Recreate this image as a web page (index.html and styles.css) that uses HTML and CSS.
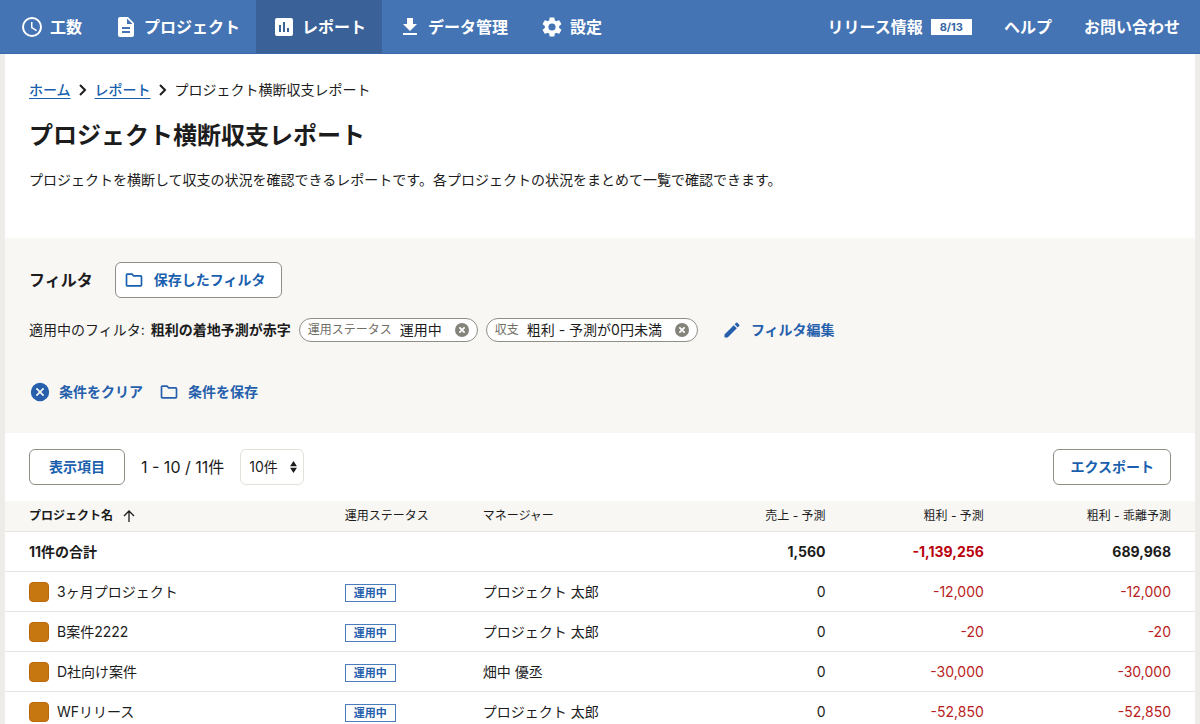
FILE: index.html
```html
<!DOCTYPE html>
<html lang="ja">
<head>
<meta charset="utf-8">
<meta name="viewport" content="width=device-width, initial-scale=1">
<title>プロジェクト横断収支レポート</title>
<link rel="stylesheet" href="styles.css">
</head>
<body>
<header class="header">
  <nav class="nav">
    <a class="nav-item" href="#"><svg class="icon-nav" viewBox="0 0 24 24"><path d="M12 2a10 10 0 1 0 0 20 10 10 0 0 0 0-20zm0 18a8 8 0 1 1 0-16 8 8 0 0 1 0 16zm.5-13H11v6l5.200 3.200.800-1.300-4.500-2.700z"/></svg>工数</a>
    <a class="nav-item" href="#"><svg class="icon-nav" viewBox="0 0 24 24"><path d="M14 2H6a2 2 0 0 0-2 2v16c0 1.100.900 2 2 2h12a2 2 0 0 0 2-2V8zm2 16H8v-2h8zm0-4H8v-2h8zm-3-5V3.500L18.500 9z"/></svg>プロジェクト</a>
    <a class="nav-item nav-current" href="#" aria-current="page"><svg class="icon-nav" viewBox="0 0 24 24"><path d="M19 3H5a2 2 0 0 0-2 2v14c0 1.100.900 2 2 2h14a2 2 0 0 0 2-2V5a2 2 0 0 0-2-2zM9 17H7v-7h2zm4 0h-2V7h2zm4 0h-2v-4h2z"/></svg>レポート</a>
    <a class="nav-item" href="#"><svg class="icon-nav" viewBox="0 0 24 24"><path d="M19 9h-4V3H9v6H5l7 7zM5 18v2h14v-2z"/></svg>データ管理</a>
    <a class="nav-item" href="#"><svg class="icon-nav" viewBox="0 0 24 24"><path d="M19.140 12.940c.040-.300.060-.610.060-.940 0-.320-.020-.640-.070-.940l2.030-1.580a.49.49 0 0 0 .120-.610l-1.920-3.320a.488.488 0 0 0-.590-.220l-2.390.960c-.500-.380-1.030-.700-1.620-.940l-.360-2.540a.484.484 0 0 0-.480-.410h-3.840c-.240 0-.430.170-.470.410l-.360 2.540c-.590.240-1.130.570-1.620.940l-2.390-.960c-.220-.080-.470 0-.590.220L2.740 8.870c-.120.210-.080.470.120.610l2.030 1.580c-.050.300-.090.630-.090.940s.020.640.070.940l-2.030 1.580a.49.49 0 0 0-.120.610l1.920 3.320c.120.220.370.290.590.220l2.390-.960c.500.380 1.030.700 1.620.940l.360 2.540c.050.240.240.410.480.410h3.840c.240 0 .440-.170.470-.410l.360-2.540c.590-.240 1.130-.560 1.620-.940l2.390.960c.220.080.470 0 .590-.220l1.920-3.320c.120-.220.070-.470-.120-.610zM12 15.600A3.600 3.600 0 1 1 12 8.400a3.600 3.600 0 0 1 0 7.200z"/></svg>設定</a>
  </nav>
  <nav class="subnav">
    <a class="subnav-item" href="#">リリース情報<span class="date">8/13</span></a>
    <a class="subnav-item" href="#">ヘルプ</a>
    <a class="subnav-item" href="#">お問い合わせ</a>
  </nav>
</header>
<main class="page">
  <section class="intro">
    <nav class="breadcrumb">
      <a class="crumb" href="#">ホーム</a>
      <svg class="chevron" viewBox="0 0 8 12"><path d="M1 1l5 5-5 5"/></svg>
      <a class="crumb" href="#">レポート</a>
      <svg class="chevron" viewBox="0 0 8 12"><path d="M1 1l5 5-5 5"/></svg>
      <span>プロジェクト横断収支レポート</span>
    </nav>
    <h1 class="title">プロジェクト横断収支レポート</h1>
    <p class="lead">プロジェクトを横断して収支の状況を確認できるレポートです。各プロジェクトの状況をまとめて一覧で確認できます。</p>
  </section>
  <section class="filter">
    <div class="filter-head">
      <h2 class="filter-title">フィルタ</h2>
      <button class="button button-saved" type="button"><svg class="icon" viewBox="0 0 24 24"><path d="M9.170 6l2 2H20v10H4V6zM10 4H4a2 2 0 0 0-2 2v12c0 1.100.900 2 2 2h16a2 2 0 0 0 2-2V8a2 2 0 0 0-2-2h-8z"/></svg>保存したフィルタ</button>
    </div>
    <div class="applied">
      <span class="applied-name">適用中のフィルタ: <b class="strong">粗利の着地予測が赤字</b></span>
      <span class="chip"><span class="chip-key">運用ステータス</span>運用中<button class="chip-remove" type="button" aria-label="運用ステータスを削除"><svg class="icon-remove" viewBox="0 0 16 16"><circle cx="8" cy="8" r="8"/><path d="M5 5l6 6M11 5l-6 6"/></svg></button></span>
      <span class="chip"><span class="chip-key">収支</span>粗利 - 予測が0円未満<button class="chip-remove" type="button" aria-label="収支を削除"><svg class="icon-remove" viewBox="0 0 16 16"><circle cx="8" cy="8" r="8"/><path d="M5 5l6 6M11 5l-6 6"/></svg></button></span>
      <button class="text-button edit" type="button"><svg class="icon" viewBox="0 0 24 24"><path d="M3 17.250V21h3.750L17.810 9.940l-3.750-3.750zM20.710 7.040a1 1 0 0 0 0-1.410l-2.340-2.340a1 1 0 0 0-1.410 0l-1.830 1.830 3.750 3.750z"/></svg>フィルタ編集</button>
    </div>
    <div class="filter-actions">
      <button class="text-button" type="button"><svg class="icon" viewBox="0 0 24 24"><path d="M12 1a11 11 0 1 0 0 22 11 11 0 0 0 0-22zm5 14.600L15.600 17 12 13.400 8.400 17 7 15.600l3.600-3.600L7 8.400 8.400 7l3.600 3.600L15.600 7 17 8.400 13.400 12z"/></svg>条件をクリア</button>
      <button class="text-button" type="button"><svg class="icon" viewBox="0 0 24 24"><path d="M9.170 6l2 2H20v10H4V6zM10 4H4a2 2 0 0 0-2 2v12c0 1.100.900 2 2 2h16a2 2 0 0 0 2-2V8a2 2 0 0 0-2-2h-8z"/></svg>条件を保存</button>
    </div>
  </section>
  <div class="toolbar">
    <button class="button" type="button">表示項目</button>
    <span class="range">1 - 10 / 11件</span>
    <span class="select-wrap">
      <select class="select" aria-label="表示件数"><option>10件</option><option>20件</option><option>50件</option></select>
      <svg class="select-arrows" viewBox="0 0 8 14"><path d="M4 0l4 6H0zM4 14l4-6H0z"/></svg>
    </span>
    <button class="button export" type="button">エクスポート</button>
  </div>
  <table class="table">
    <thead>
      <tr>
        <th class="col-name" scope="col" aria-sort="ascending">プロジェクト名<svg class="sort" viewBox="0 0 12 12"><path d="M6 12V1M1 6l5-5 5 5"/></svg></th>
        <th class="col-status" scope="col">運用ステータス</th>
        <th class="col-manager" scope="col">マネージャー</th>
        <th class="col-amount num" scope="col">売上 - 予測</th>
        <th class="col-amount num" scope="col">粗利 - 予測</th>
        <th class="col-gap num" scope="col">粗利 - 乖離予測</th>
      </tr>
    </thead>
    <tbody>
      <tr class="total"><td>11件の合計</td><td></td><td></td><td class="num">1,560</td><td class="num minus">-1,139,256</td><td class="num">689,968</td></tr>
      <tr><td><span class="project"><span class="swatch"></span>3ヶ月プロジェクト</span></td><td><span class="status">運用中</span></td><td>プロジェクト 太郎</td><td class="num">0</td><td class="num minus">-12,000</td><td class="num minus">-12,000</td></tr>
      <tr><td><span class="project"><span class="swatch"></span>B案件2222</span></td><td><span class="status">運用中</span></td><td>プロジェクト 太郎</td><td class="num">0</td><td class="num minus">-20</td><td class="num minus">-20</td></tr>
      <tr><td><span class="project"><span class="swatch"></span>D社向け案件</span></td><td><span class="status">運用中</span></td><td>畑中 優丞</td><td class="num">0</td><td class="num minus">-30,000</td><td class="num minus">-30,000</td></tr>
      <tr><td><span class="project"><span class="swatch"></span>WFリリース</span></td><td><span class="status">運用中</span></td><td>プロジェクト 太郎</td><td class="num">0</td><td class="num minus">-52,850</td><td class="num minus">-52,850</td></tr>
    </tbody>
  </table>
</main>
</body>
</html>
```
FILE: styles.css
```css
* { box-sizing: border-box; }

body {
  margin: 0;
  background: #edece8;
  color: #1c1c1c;
  font-family: Inter, "Noto Sans CJK JP", sans-serif;
  font-size: 14px;
  line-height: 20px;
}

button, select {
  font: inherit;
  cursor: pointer;
}

svg { fill: currentColor; flex: none; }

/* Header */
.header {
  display: flex;
  justify-content: space-between;
  height: 54px;
  background: #4474b4;
  border-bottom: 1px solid #3a69aa;
  font-size: 16px;
  font-weight: 700;
  white-space: nowrap;
}

.nav, .subnav { display: flex; }

.nav { padding-left: 4px; }

.subnav { padding-right: 4px; }

.nav-item, .subnav-item {
  display: flex;
  align-items: center;
  gap: 8px;
  padding: 0 16px;
  color: #fff;
  text-decoration: none;
}

.nav-item { gap: 6px; }

.nav-current { background: #3a6298; }

.icon-nav { width: 24px; height: 24px; }

.date {
  padding: 0 9px;
  background: #fff;
  color: #3567a8;
  font-size: 11px;
  line-height: 16px;
}

/* Page */
.page {
  margin: 0 5px;
  background: #fff;
}

.intro { padding: 26px 24px 48px; }

.breadcrumb {
  display: flex;
  align-items: center;
  gap: 8px;
}

.crumb {
  color: #1a5fae;
  font-weight: 500;
  text-underline-offset: 3px;
}

.chevron {
  width: 8px;
  height: 12px;
  fill: none;
  stroke: #1c1c1c;
  stroke-width: 2;
}

.title {
  margin: 18px 0 16px;
  font-size: 24px;
  line-height: 36px;
}

.lead { margin: 0; }

/* Filter */
.filter {
  padding: 24px;
  background: #f8f7f4;
}

.filter-head, .applied, .filter-actions, .toolbar {
  display: flex;
  align-items: center;
}

.filter-head { gap: 22px; }

.filter-title {
  margin: 0;
  font-size: 16px;
}

.button {
  display: flex;
  align-items: center;
  gap: 10px;
  height: 36px;
  padding: 0 19px;
  border: 1px solid #8f8e85;
  border-radius: 6px;
  background: #fff;
  color: #1a5fae;
  font-weight: 700;
}

.button-saved { padding: 0 16px 0 8px; }

.icon { width: 20px; height: 20px; }

.applied {
  flex-wrap: wrap;
  gap: 8px;
  margin-top: 20px;
}

.strong { margin-left: 2px; }

.chip {
  display: flex;
  align-items: center;
  height: 24px;
  padding: 0 8px;
  border: 1px solid #8f8e85;
  border-radius: 12px;
  background: #fff;
}

.chip-key {
  margin-right: 8px;
  color: #706f66;
  font-size: 12px;
}

.chip-remove {
  display: flex;
  margin-left: 13px;
  padding: 0;
  border: 0;
  background: none;
  color: #84837a;
}

.icon-remove {
  width: 14px;
  height: 14px;
  stroke: #fff;
  stroke-width: 2;
}

.icon-remove circle { stroke: none; }

.text-button {
  display: flex;
  align-items: center;
  gap: 9px;
  padding: 0;
  border: 0;
  background: none;
  color: #2660ac;
  font-weight: 700;
}

.edit { margin-left: 16px; }

.filter-actions {
  gap: 16px;
  margin-top: 40px;
  padding: 0 0 7px 1px;
}

/* List toolbar */
.toolbar {
  gap: 16px;
  padding: 16px 24px;
}

.range { font-size: 16px; }

.select-wrap { position: relative; }

.select {
  display: block;
  height: 36px;
  padding: 0 22px 0 8px;
  appearance: none;
  border: 1px solid #e3e1da;
  border-radius: 6px;
  background: #fff;
  color: #1c1c1c;
}

.select-arrows {
  position: absolute;
  top: 12px;
  right: 7px;
  width: 7px;
  height: 12px;
  pointer-events: none;
}

.export { margin-left: auto; padding: 0 16px; }

/* Table */
.table {
  width: 100%;
  table-layout: fixed;
  border-collapse: separate;
  border-spacing: 0;
}

.table th, .table td {
  padding: 0 16px;
  border-bottom: 1px solid #e6e5e0;
  text-align: left;
  white-space: nowrap;
}

.table th {
  height: 31px;
  background: #f8f7f4;
  font-size: 12px;
  font-weight: 400;
}

.table td { height: 40px; }

.table th:first-child, .table td:first-child { padding-left: 24px; }

.table th:last-child, .table td:last-child { padding-right: 24px; }

.table .col-name { width: 27.2%; font-weight: 700; }

.col-status { width: 11.6%; }

.col-manager { width: 18.2%; }

.col-amount { width: 13.3%; }

.table .num { text-align: right; }

.sort {
  width: 12px;
  height: 12px;
  margin-left: 10px;
  vertical-align: -2px;
  fill: none;
  stroke: currentColor;
  stroke-width: 1.3;
}

.total { font-weight: 700; }

.minus { color: #b91c22; }

.total .minus { color: #b9000c; }

.project {
  display: flex;
  align-items: center;
  gap: 8px;
}

.swatch {
  width: 20px;
  height: 20px;
  border: 1px solid #b9690c;
  border-radius: 4px;
  background: #c7770f;
}

.status {
  display: inline-block;
  padding: 0 8px;
  border: 1px solid #4c7cbc;
  color: #2660ac;
  font-size: 11px;
  font-weight: 700;
  line-height: 16px;
  vertical-align: middle;
}
```
